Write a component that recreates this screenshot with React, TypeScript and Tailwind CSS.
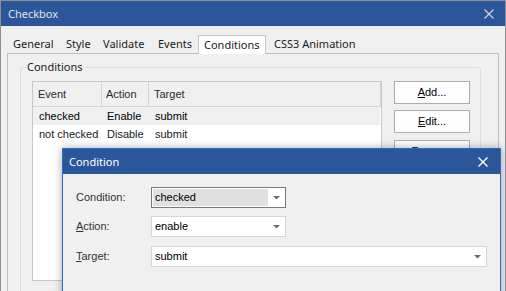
import React from "react";

const Arrow = () => (
  <svg width="7" height="4" viewBox="0 0 7 4" className="block">
    <polygon points="0,0 7,0 3.5,3.5" fill="#6d6d6d" />
  </svg>
);

function Tab({ label, w, pl, selected }: { label: string; w?: string; pl: string; selected?: boolean }) {
  if (selected) {
    return (
      <div className="relative z-10 mb-[-1px] h-[19px] w-[68px] border border-b-0 border-[#c6c6c6] bg-white pl-[5px] flex items-center">
        {label}
      </div>
    );
  }
  return (
    <div className={`h-[19px] flex items-center ${w ?? ""} ${pl}`}>{label}</div>
  );
}

export default function App() {
  return (
    <div className="relative w-[506px] h-[291px] overflow-hidden bg-[#f0f0f0] font-['Liberation_Sans',Arial,sans-serif]">
      <div className="flex flex-col h-full border border-b-0 border-[#8f8f8f]">
        {/* title bar */}
        <div className="h-[25px] shrink-0 bg-[#2b579a] flex items-center justify-between pl-[7px] pr-[11px]">
          <span className="font-['Noto_Sans',sans-serif] text-[11px] leading-[14px] text-[#e4e4e4]">Checkbox</span>
          <svg width="10" height="10" viewBox="0 0 10 10" className="block">
            <path d="M0.5 0.5 L9.5 9.5 M9.5 0.5 L0.5 9.5" stroke="#d6d6d6" strokeWidth="1.1" />
          </svg>
        </div>
        {/* tabs */}
        <div className="h-[27px] shrink-0 flex items-end pl-[6px] font-['Noto_Sans',sans-serif] text-[11px] leading-[14px] text-[#1b1b1b]">
          <Tab label="General" w="w-[52px]" pl="pl-[6px]" />
          <Tab label="Style" w="w-[38px]" pl="pl-[7px]" />
          <Tab label="Validate" w="w-[54px]" pl="pl-[6px]" />
          <Tab label="Events" w="w-[47px]" pl="pl-[7px]" />
          <Tab label="Conditions" pl="" selected />
          <Tab label="CSS3 Animation" pl="pl-[8px]" />
        </div>
        {/* panel */}
        <div className="flex-1 ml-[6px] mr-[6px] border border-[#bdbdbd] bg-[#f0f0f0] pt-[6px] pl-[12px] pr-[17px]">
          <fieldset className="h-[260px] border border-[#dcdcdc] rounded-[3px] p-0">
            <legend className="ml-[4px] px-[2px] font-['Noto_Sans',sans-serif] text-[11px] leading-[14px] text-[#1b1b1b]">
              Conditions
            </legend>
            <div className="flex gap-[12px] pt-[7px] pl-[11px] pr-[10px]">
              {/* list view */}
              <div className="w-[350px] h-[200px] border border-[#c8c8c8] bg-white text-[11px] leading-[13px]">
                <div className="h-[25px] flex border-b border-[#d5d5d5] bg-[#f0f0f0] text-[#2a2a2a]">
                  <div className="w-[69px] pl-[5px] flex items-center border-r border-[#d5d5d5]">Event</div>
                  <div className="w-[47px] pl-[4px] flex items-center border-r border-[#d5d5d5]">Action</div>
                  <div className="flex-1 pl-[5px] flex items-center border-r border-[#d5d5d5]">Target</div>
                </div>
                <div className="h-[18px] flex items-center bg-[#f0f0f0] text-black mr-[1px]">
                  <div className="w-[69px] pl-[6px]">checked</div>
                  <div className="w-[47px] pl-[5px]">Enable</div>
                  <div className="flex-1 pl-[6px]">submit</div>
                </div>
                <div className="h-[18px] flex items-center text-[#1a1a1a]">
                  <div className="w-[69px] pl-[6px] whitespace-nowrap">not checked</div>
                  <div className="w-[47px] pl-[5px]">Disable</div>
                  <div className="flex-1 pl-[6px]">submit</div>
                </div>
              </div>
              {/* buttons */}
              <div className="flex flex-col gap-[6px] text-[11px] leading-[13px] text-black">
                <div className="w-[76px] h-[23px] border border-[#adadad] bg-[#fdfdfd] flex items-center justify-center">
                  <span><span className="underline">A</span>dd...</span>
                </div>
                <div className="w-[76px] h-[23px] border border-[#adadad] bg-[#fdfdfd] flex items-center justify-center">
                  <span><span className="underline">E</span>dit...</span>
                </div>
                <div className="w-[76px] h-[23px] mt-[1px] border border-[#adadad] bg-[#fdfdfd] flex items-center justify-center">
                  <span><span className="underline">R</span>emove</span>
                </div>
              </div>
            </div>
          </fieldset>
        </div>
      </div>

      {/* Condition dialog */}
      <div className="absolute left-[62px] top-[148px] w-[439px] h-[160px] border border-[#2f6cc6] bg-[#f0f0f0] shadow-[0_0_8px_rgba(0,0,0,0.35)] flex flex-col">
        <div className="h-[25px] shrink-0 bg-[#2b579a] flex items-center justify-between pl-[6px] pr-[12px]">
          <span className="font-['Noto_Sans',sans-serif] text-[11px] leading-[14px] text-white">Condition</span>
          <svg width="10" height="10" viewBox="0 0 10 10" className="block">
            <path d="M0.5 0.5 L9.5 9.5 M9.5 0.5 L0.5 9.5" stroke="#ffffff" strokeWidth="1.4" />
          </svg>
        </div>
        <div className="pt-[13px] pl-[13px] text-[11px] leading-[13px]">
          <div className="flex items-center h-[21px]">
            <div className="w-[75px] text-[#333]">Condition:</div>
            <div className="w-[135px] h-[21px] border border-[#7a7a7a] bg-white flex p-[1px]">
              <div className="w-[115px] bg-[#e0e0e0] pl-[2px] flex items-center text-black">checked</div>
              <div className="flex-1 flex items-center justify-center"><Arrow /></div>
            </div>
          </div>
          <div className="flex items-center h-[21px] mt-[8px]">
            <div className="w-[75px] text-[#333]"><span className="underline">A</span>ction:</div>
            <div className="w-[135px] h-[21px] border border-[#d6d6d6] bg-white flex">
              <div className="flex-1 pl-[3px] flex items-center text-black">enable</div>
              <div className="w-[18px] flex items-center justify-center"><Arrow /></div>
            </div>
          </div>
          <div className="flex items-center h-[21px] mt-[9px]">
            <div className="w-[75px] text-[#333]"><span className="underline">T</span>arget:</div>
            <div className="w-[336px] h-[21px] border border-[#d6d6d6] bg-white flex">
              <div className="flex-1 pl-[3px] flex items-center text-black">submit</div>
              <div className="w-[18px] flex items-center justify-center"><Arrow /></div>
            </div>
          </div>
        </div>
      </div>
    </div>
  );
}
